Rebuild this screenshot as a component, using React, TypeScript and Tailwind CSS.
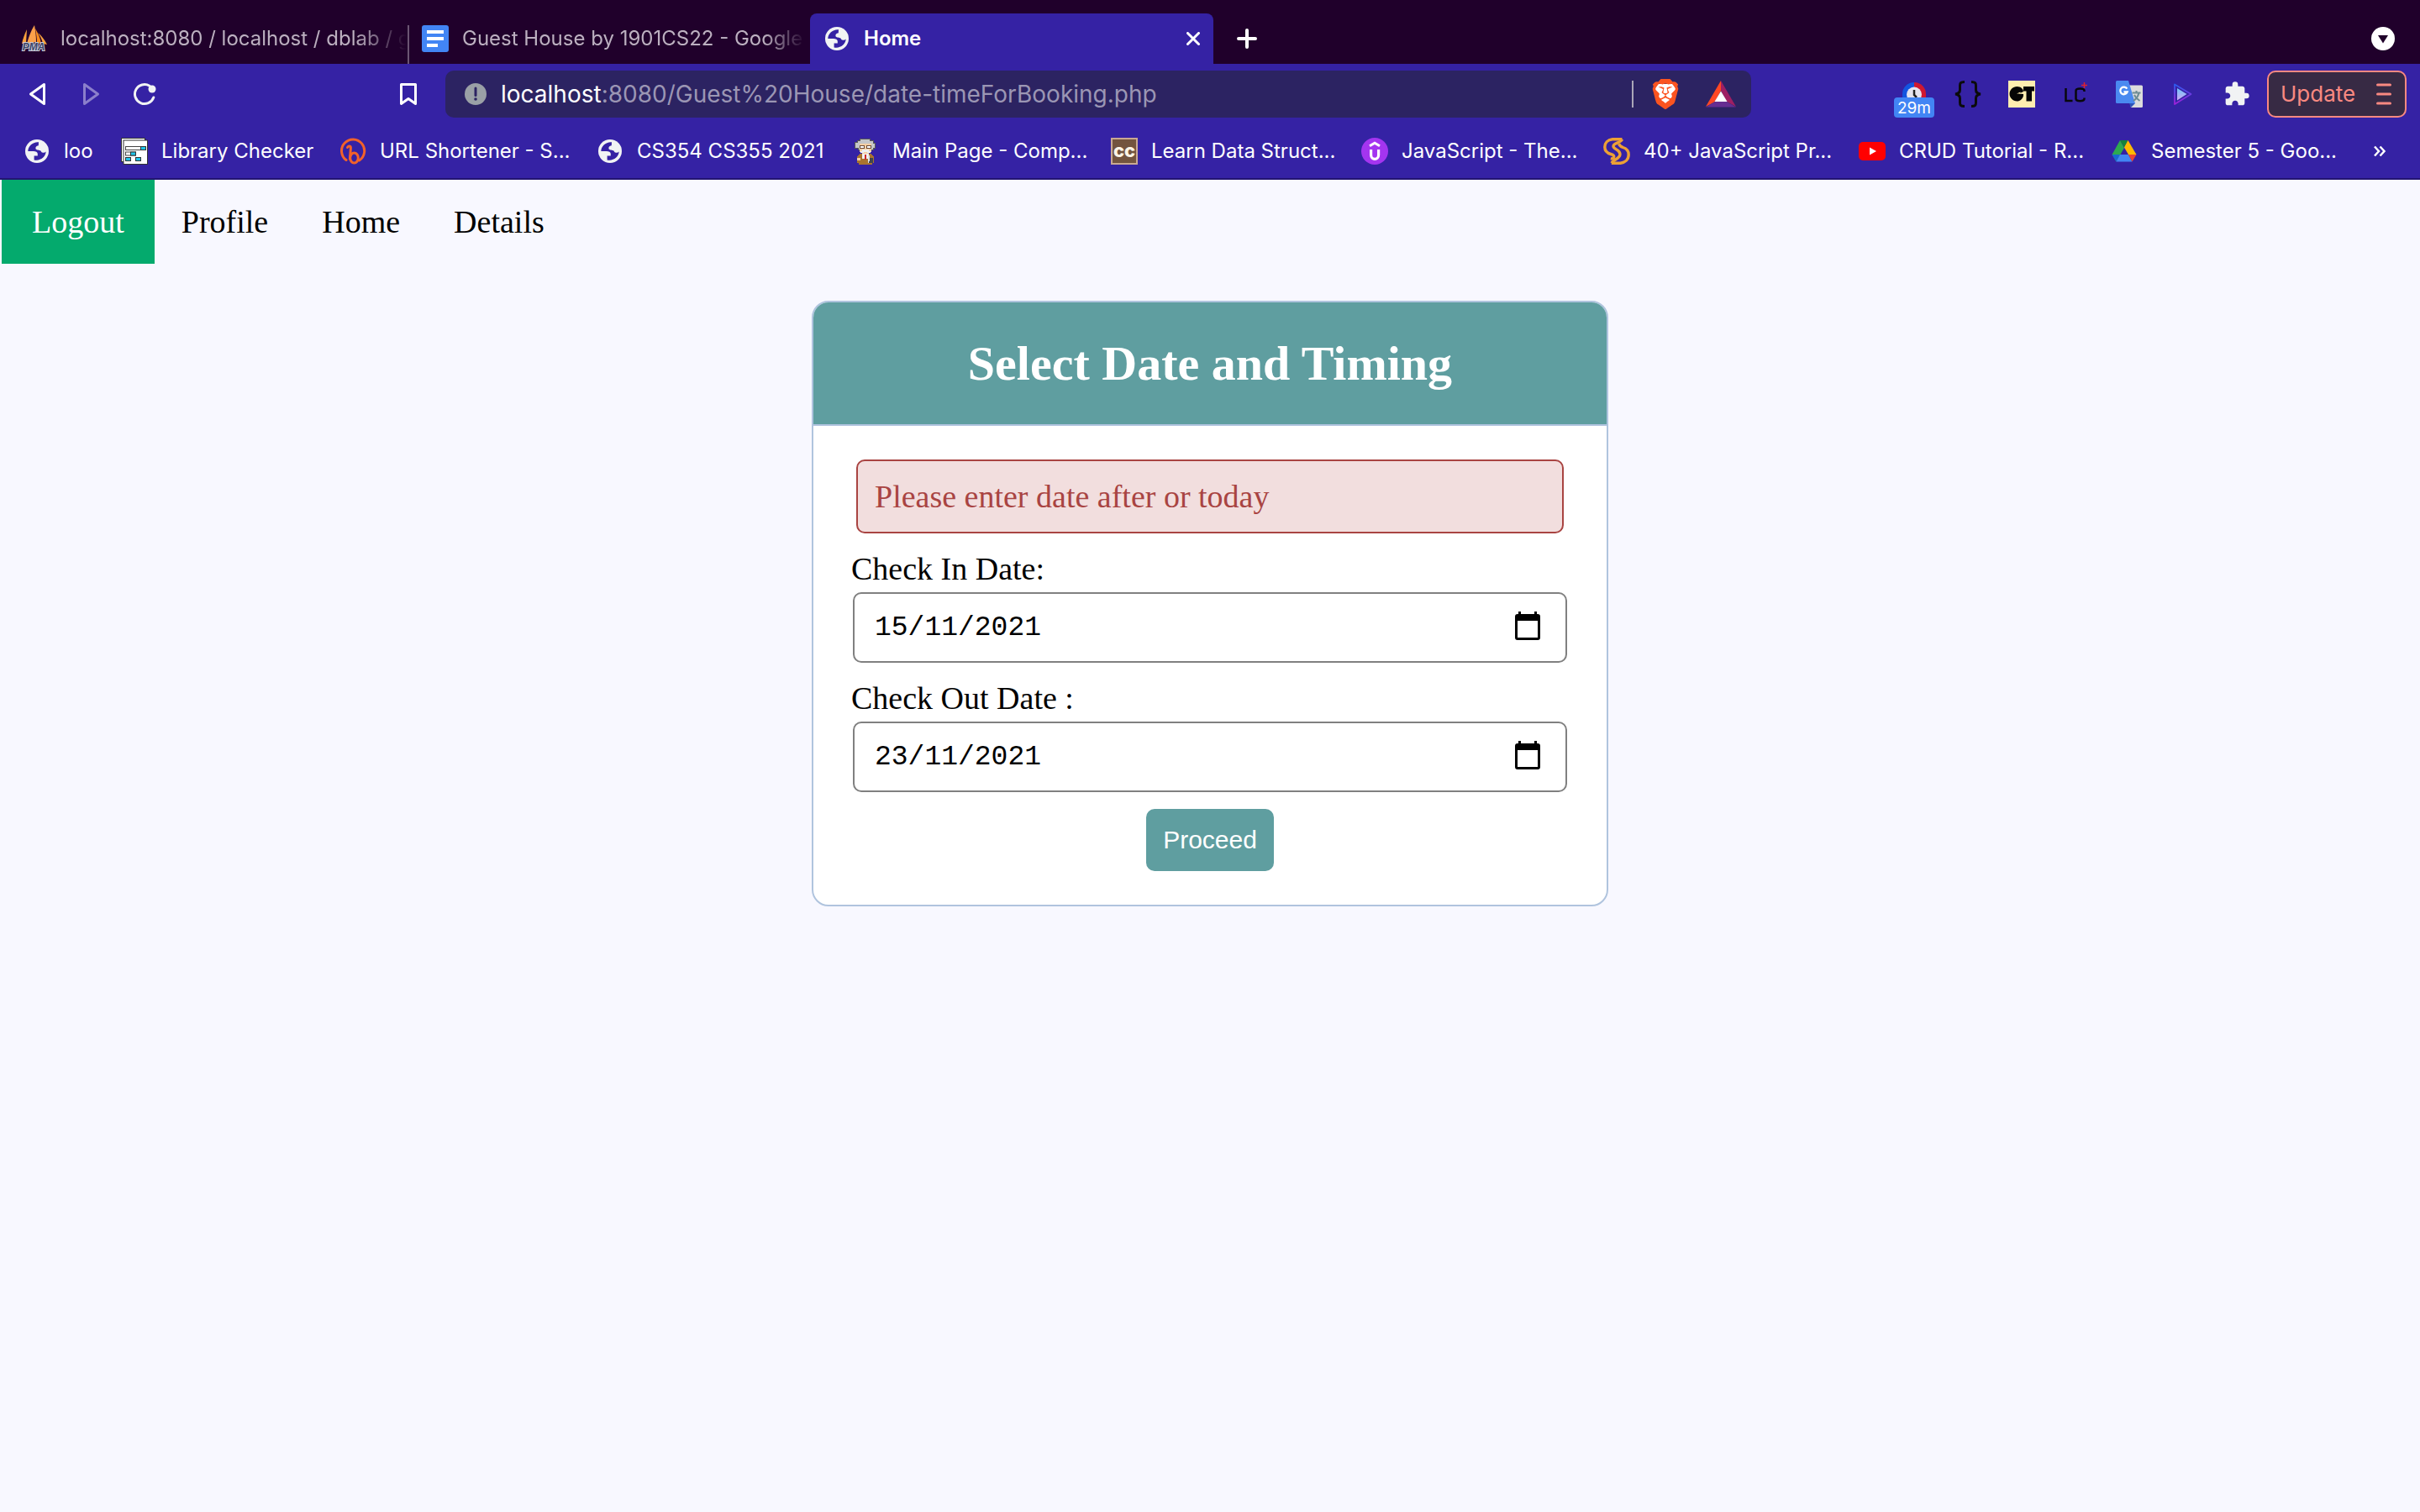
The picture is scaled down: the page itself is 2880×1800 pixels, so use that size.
import type { ReactNode } from "react";
import { SiBrave } from "react-icons/si";
import { MdExtension } from "react-icons/md";

function GlobeIcon() {
  return (
    <svg viewBox="0 0 28 28" className="size-7 shrink-0" aria-hidden="true">
      <circle cx="14" cy="14" r="14" fill="#f1f3f4" />
      <path
        d="M16 3.2C9 2.6 3.3 8 3.3 14H9.8C12.5 14 14.8 15 14.8 17V19.5H10.6V24.4C17.5 26 24.3 21.3 24.7 14.6C23 16.4 20.2 16.2 19 14.4C17.8 12.2 14.6 13.4 12.6 11.6C11.8 9.2 13 7.6 15.8 7.2Z"
        fill="#3522a4"
      />
    </svg>
  );
}

function PmaIcon() {
  return (
    <svg viewBox="0 0 32 32" className="size-8 shrink-0" aria-hidden="true">
      <path d="M8 5C5 11 3 17 2 22L7 21Z" fill="#f9a13d" />
      <path d="M17 0C12 8 10 15 8 22L19 20C19 12 18 6 17 0Z" fill="#fba04a" />
      <path d="M18 4C19 10 20 15 20 21L25 22C24 15 21 9 18 4Z" fill="#f98b1d" />
      <path d="M21 9C24 13 26 17 27 22L32 23C29 17 25 12 21 9Z" fill="#f9a13d" />
      <text x="16" y="30" textAnchor="middle" fontFamily="Liberation Sans, sans-serif" fontWeight="700" fontStyle="italic" fontSize="12" fill="#3b4468" stroke="#c9cbd8" strokeWidth="2" paintOrder="stroke">
        PMA
      </text>
    </svg>
  );
}

function DocsIcon() {
  return (
    <svg viewBox="0 0 32 32" className="size-8 shrink-0" aria-hidden="true">
      <rect width="32" height="32" rx="3" fill="#4285f4" />
      <path d="M6 6H26V10H6ZM6 14H26V18H6ZM6 22H19V26H6Z" fill="#fff" />
    </svg>
  );
}

function LibraryIcon() {
  return (
    <svg viewBox="0 0 32 32" className="size-8 shrink-0" aria-hidden="true">
      <rect x="0.5" y="0.5" width="28" height="28" fill="#fff" stroke="#333" />
      <rect x="3" y="3" width="28.5" height="28.5" fill="#fff" stroke="#333" />
      <g stroke="#444" fill="#fff">
        <rect x="5.5" y="10.5" width="24" height="4" />
        <rect x="5.5" y="17" width="12" height="4" />
      </g>
      <g stroke="#333" fill="#1fc4e8">
        <rect x="23.5" y="10.5" width="6" height="4" />
        <rect x="11.5" y="17" width="6" height="4" />
        <rect x="5.5" y="23.5" width="6" height="4" />
        <rect x="17.5" y="23.5" width="6" height="4" />
      </g>
    </svg>
  );
}

function BitlyIcon() {
  return (
    <svg viewBox="0 0 32 32" className="size-8 shrink-0" aria-hidden="true" fill="none" stroke="#f2622a" strokeLinecap="round">
      <path d="M8 26.5A13.6 13.6 0 1 1 23.5 27" strokeWidth="3" />
      <path d="M9.5 11.5C11 9.2 13.6 9.6 13.4 12.5L12.4 25" strokeWidth="3" />
      <ellipse cx="17.5" cy="24" rx="4.8" ry="6" strokeWidth="3" />
    </svg>
  );
}

function ProfessorIcon() {
  return (
    <svg viewBox="0 0 32 32" className="size-8 shrink-0" aria-hidden="true" shapeRendering="crispEdges">
      <path d="M9 1H22V3H26V6H28V13H26V15H7V13H3V5H6V3H9Z" fill="#555" />
      <path d="M10 2H21V4H25V7H27V12H25V14H8V12H4V6H7V4H10Z" fill="#c4c6c8" />
      <path d="M9 7H23V17H20V19H12V17H9Z" fill="#f4cfa4" />
      <path d="M9 9H15V13H9ZM17 9H23V13H17Z" fill="#6b4a35" />
      <path d="M10 10H14V12H10ZM18 10H22V12H18Z" fill="#fff" />
      <path d="M12 14H20V16H22V18H18V17H14V18H10V16H12Z" fill="#eceff1" />
      <path d="M9 19H23L26 23V30H24V32H8V30H6V23Z" fill="#a9742f" />
      <path d="M12 19H20V25H12Z" fill="#f2f2f2" />
      <path d="M15 20H17V26H15Z" fill="#cc2a2a" />
      <path d="M19 21H21V30H19Z" fill="#dfe3e6" />
      <path d="M21 24H25V30H20V28H21Z" fill="#3f4650" />
      <path d="M6 24H10V27H6Z" fill="#f4cfa4" />
    </svg>
  );
}

function CodeChefIcon() {
  return (
    <span className="flex size-8 shrink-0 items-center justify-center border-2 border-[#c9a893] bg-[#73543f] pb-0.5 text-[22px] leading-none font-extrabold text-[#fbf3e6]">
      cc
    </span>
  );
}

function UdemyIcon() {
  return (
    <svg viewBox="0 0 32 32" className="size-8 shrink-0" aria-hidden="true" fill="none" stroke="#fff">
      <circle cx="16" cy="16" r="16" fill="#a435f0" stroke="none" />
      <path d="M10 9.8L16 6.2L22 9.8" strokeWidth="3" />
      <path d="M11.6 14V20.5C11.6 27 20.6 27 20.6 20.5V14" strokeWidth="3.2" />
    </svg>
  );
}

function ScalerIcon() {
  return (
    <svg viewBox="0 0 32 32" className="size-8 shrink-0" aria-hidden="true" fill="none" stroke="#eda035" strokeWidth="3.4">
      <path d="M22.500 1.800H11C5 2.500 1.800 6.500 1.800 11C1.800 16 5.500 18.500 9 19.500C12.500 20.500 13.500 22 12.500 23.800C11.500 25.300 10 25 8.800 24.800" />
      <path d="M22.500 1.800C20.500 6.500 12 6 12 10C12 14 20 14 20 19.500C20 25 12.500 25.500 9.800 30.200" />
      <path d="M18.500 7.200C19.500 9.500 21 10.500 23.500 11.500C28 13 30.200 16 30.200 20C30.200 26 26 29.500 20.500 30.200H9.800" />
    </svg>
  );
}

function YoutubeIcon() {
  return (
    <svg viewBox="0 0 32 32" className="size-8 shrink-0" aria-hidden="true">
      <rect x="0" y="5" width="32" height="22" rx="5" fill="#f00" />
      <path d="M13 11.4L21 16L13 20.6Z" fill="#fff" />
    </svg>
  );
}

function DriveIcon() {
  return (
    <svg viewBox="0 0 32 32" className="size-8 shrink-0" aria-hidden="true">
      <path d="M11 3L16 12L6.500 28.500L1.500 20Z" fill="#2da94f" />
      <path d="M11 3H20.500L16 11.500Z" fill="#12833b" />
      <path d="M20.500 3L30.500 20H21L16 11.500Z" fill="#ffba00" />
      <path d="M1.500 20H11L6.500 28.500Z" fill="#1967d2" />
      <path d="M11 20H21L25.500 28.500H6.500Z" fill="#4285f4" />
      <path d="M21 20H30.500L25.500 28.500Z" fill="#ea4335" />
    </svg>
  );
}

function TimerIcon() {
  return (
    <span className="relative flex size-8 justify-center">
      <svg viewBox="0 0 32 32" className="size-8" aria-hidden="true">
        <path d="M16 2A14 14 0 0 0 2 16V20H16Z" fill="#1355e0" />
        <path d="M16 2A14 14 0 0 1 30 16V20H16Z" fill="#cf1830" />
        <circle cx="16" cy="16.500" r="9" fill="#e6e4ef" />
        <path d="M16 11V17L19 20" stroke="#222" strokeWidth="2.500" fill="none" />
      </svg>
      <span className="absolute top-5 flex h-6 w-12 items-center justify-center rounded bg-[#4285f4] text-[19px] leading-none text-white">
        29m
      </span>
    </span>
  );
}

function BracesIcon() {
  return (
    <svg viewBox="0 0 32 32" className="size-8" aria-hidden="true" fill="none" stroke="#0b0b0b" strokeWidth="3">
      <path d="M12 1.500C7 1.500 6.500 3 6.500 6V11C6.500 14 5 15.500 1 16C5 16.500 6.500 18 6.500 21V26C6.500 29 7 30.500 12 30.500" />
      <path d="M20 1.500C25 1.500 25.500 3 25.500 6V11C25.500 14 27 15.500 31 16C27 16.500 25.500 18 25.500 21V26C25.500 29 25 30.500 20 30.500" />
    </svg>
  );
}

function CtIcon() {
  return (
    <svg viewBox="0 0 32 32" className="size-8" aria-hidden="true">
      <rect width="32" height="32" fill="#ffeeb0" />
      <path d="M10.500 7C15 7 18 10 18 13L13 15.500L18 16V18C17 22 14 24.500 10.500 24.500C5.500 24.500 1.500 20.500 1.500 15.800C1.500 11 5.500 7 10.500 7Z" fill="#050505" />
      <path d="M10 15.500L14.500 13.500V15.500Z" fill="#ffeeb0" />
      <path d="M18 7H31V12.500H28V24.500H21.500V12.500H18Z" fill="#050505" />
    </svg>
  );
}

function LcIcon() {
  return (
    <svg viewBox="0 0 32 32" className="size-8" aria-hidden="true" fill="none">
      <path d="M4.500 9V24H12.500" stroke="#08080c" strokeWidth="2.500" />
      <path d="M26.500 13V12C26.500 8.800 16.500 8.800 16.500 12V21.500C16.500 25 26.500 25 26.500 21.500V20.500" stroke="#08080c" strokeWidth="2.500" />
      <path d="M26.500 2V9M23 5.500H30" stroke="#e0202f" strokeWidth="1.500" />
    </svg>
  );
}

function TranslateIcon() {
  return (
    <svg viewBox="0 0 32 32" className="size-8" aria-hidden="true">
      <path d="M13 5.500H30.500Q32 5.500 32 7V30.500Q32 32 30.500 32H18Z" fill="#dcdcdc" />
      <path d="M16 27H23L18 32Z" fill="#2f55b8" />
      <path d="M1.500 0H15L23 27H1.500Q0 27 0 25.500V1.500Q0 0 1.500 0Z" fill="#4a8af0" />
      <path d="M13.300 9.700A4.300 4.300 0 1 0 13.600 13.500H9.500" fill="none" stroke="#fff" strokeWidth="2.300" />
      <path d="M19.500 14.500H29.500M24.500 12V14.500M27.500 14.500C26.500 19 24 22 21 24M22 17C23.500 20 26 22.500 28.500 24" fill="none" stroke="#6d8c94" strokeWidth="2" />
    </svg>
  );
}

function PlayIcon() {
  return (
    <svg viewBox="0 0 32 32" className="size-8" aria-hidden="true">
      <defs>
        <linearGradient id="playEdge" x1="0" y1="0" x2="0" y2="1">
          <stop offset="0" stopColor="#2b5cf0" />
          <stop offset="0.500" stopColor="#6a3be0" />
          <stop offset="1" stopColor="#a020d8" />
        </linearGradient>
        <linearGradient id="playFill" x1="0" y1="0" x2="0" y2="1">
          <stop offset="0" stopColor="#6fc4fa" />
          <stop offset="1" stopColor="#cfa8f4" />
        </linearGradient>
      </defs>
      <path d="M6 4.500L25.500 16L6 28Z" fill="none" stroke="url(#playEdge)" strokeWidth="1.800" strokeLinejoin="round" />
      <path d="M9 9L20.500 16L9 23.500Z" fill="url(#playFill)" />
    </svg>
  );
}

const bookmarks: { label: string; icon: ReactNode; width: string }[] = [
  { label: "loo", icon: <GlobeIcon />, width: "w-[116px]" },
  { label: "Library Checker", icon: <LibraryIcon />, width: "w-[260px]" },
  { label: "URL Shortener - S...", icon: <BitlyIcon />, width: "w-[306px]" },
  { label: "CS354 CS355 2021", icon: <GlobeIcon />, width: "w-[304px]" },
  { label: "Main Page - Comp...", icon: <ProfessorIcon />, width: "w-[308px]" },
  { label: "Learn Data Struct...", icon: <CodeChefIcon />, width: "w-[298px]" },
  { label: "JavaScript - The...", icon: <UdemyIcon />, width: "w-[288px]" },
  { label: "40+ JavaScript Pr...", icon: <ScalerIcon />, width: "w-[304px]" },
  { label: "CRUD Tutorial - R...", icon: <YoutubeIcon />, width: "w-[300px]" },
  { label: "Semester 5 - Goo...", icon: <DriveIcon />, width: "w-[300px]" },
];

const extensions: { name: string; icon: ReactNode }[] = [
  { name: "Timer", icon: <TimerIcon /> },
  { name: "JSON viewer", icon: <BracesIcon /> },
  { name: "CT", icon: <CtIcon /> },
  { name: "LC", icon: <LcIcon /> },
  { name: "Translate", icon: <TranslateIcon /> },
  { name: "Player", icon: <PlayIcon /> },
  { name: "Extensions", icon: <MdExtension className="size-8 text-[#f1f3f4]" /> },
];

function TabStrip() {
  return (
    <div className="flex h-[76px] items-end bg-[#20002b] text-[24px] leading-8 text-[#bcb0c0]">
      <button type="button" className="flex h-[60px] w-[484px] items-center gap-4 pl-6 text-left">
        <PmaIcon />
        <span className="min-w-0 flex-1 overflow-hidden whitespace-nowrap [mask-image:linear-gradient(to_right,black_85%,transparent)]">
          localhost:8080 / localhost / dblab / guest
        </span>
      </button>
      <span className="mx-px h-[46px] w-0.5 bg-[#6b5573]" />
      <button type="button" className="flex h-[60px] w-[476px] items-center gap-4 px-[14px] text-left">
        <DocsIcon />
        <span className="-mr-2 min-w-0 flex-1 overflow-hidden whitespace-nowrap [mask-image:linear-gradient(to_right,black_88%,transparent)]">
          Guest House by 1901CS22 - Google Docs
        </span>
      </button>
      <div className="flex h-[60px] w-[480px] items-center gap-[18px] rounded-t-lg bg-[#3522a4] pr-4 pl-[18px] font-semibold text-white">
        <GlobeIcon />
        <span className="flex-1">Home</span>
        <button type="button" aria-label="Close tab">
          <svg viewBox="0 0 16 16" className="size-4" fill="none" stroke="#fff" strokeWidth="3" strokeLinecap="round">
            <path d="M1.500 1.500L14.500 14.500M14.500 1.500L1.500 14.500" />
          </svg>
        </button>
      </div>
      <button type="button" aria-label="New tab" className="flex h-[60px] items-center pl-7">
        <svg viewBox="0 0 24 24" className="size-6" fill="none" stroke="#fff" strokeWidth="4" strokeLinecap="round">
          <path d="M12 2V22M2 12H22" />
        </svg>
      </button>
      <button type="button" aria-label="Search tabs" className="mr-[30px] ml-auto flex h-[60px] items-center">
        <svg viewBox="0 0 28 28" className="size-7">
          <circle cx="14" cy="14" r="14" fill="#fff" />
          <path d="M8 10H20L14 19.500Z" fill="#20002b" />
        </svg>
      </button>
    </div>
  );
}

function Toolbar() {
  return (
    <div className="flex h-[72px] items-center bg-[#3522a4]">
      <button type="button" aria-label="Back" className="ml-8">
        <svg viewBox="0 0 24 28" className="h-7 w-6" fill="none" stroke="#fff" strokeWidth="3" strokeLinejoin="round">
          <path d="M20.500 2.500V25.500L4.500 14Z" />
        </svg>
      </button>
      <button type="button" aria-label="Forward" className="ml-10" disabled>
        <svg viewBox="0 0 24 28" className="h-7 w-6" fill="none" stroke="#8b7fcb" strokeWidth="3" strokeLinejoin="round">
          <path d="M4.500 2.500V25.500L20.500 14Z" />
        </svg>
      </button>
      <button type="button" aria-label="Reload" className="ml-[38px]">
        <svg viewBox="0 0 28 28" className="size-7" fill="none" stroke="#f1f3f4" strokeWidth="3" strokeLinecap="round">
          <path d="M20 4.200A11.500 11.500 0 1 0 24.800 18" />
          <circle cx="23" cy="8" r="4.500" fill="#f1f3f4" stroke="none" />
        </svg>
      </button>
      <button type="button" aria-label="Bookmark this page" className="ml-72">
        <svg viewBox="0 0 24 28" className="h-7 w-6" fill="none" stroke="#fff" strokeWidth="3" strokeLinejoin="round">
          <path d="M3.500 2.500H20.500V25.500L12 19.500L3.500 25.500Z" />
        </svg>
      </button>
      <div className="ml-8 flex h-14 w-[1554px] items-center rounded-[10px] bg-[#2c2362] pr-[18px] pl-[22px]">
        <svg viewBox="0 0 28 28" className="size-7" aria-hidden="true">
          <circle cx="14" cy="14" r="13" fill="#9aa0a6" />
          <path d="M14 7V15.500" stroke="#2c2362" strokeWidth="3" strokeLinecap="round" />
          <circle cx="14" cy="20" r="1.800" fill="#2c2362" />
        </svg>
        <div className="ml-4 flex-1 text-[28px] leading-8 whitespace-nowrap text-[#9b96b4]">
          <span className="text-white">localhost</span>:8080/Guest%20House/date-timeForBooking.php
        </div>
        <span className="h-8 w-0.5 bg-[#aaa6b8]" />
        <button type="button" aria-label="Shields" className="relative ml-5">
          <svg viewBox="0 0 36 36" className="size-9">
            <path d="M9 6H27L31 12L27 27L18 34L9 27L5 12Z" fill="#fff" />
          </svg>
          <SiBrave className="absolute inset-0 size-9 text-[#fb5420]" />
        </button>
        <button type="button" aria-label="Rewards" className="ml-[30px]">
          <svg viewBox="0 0 36 32" className="h-8 w-9">
            <path d="M18 0V12L11 25L0 31Z" fill="#ff4724" />
            <path d="M18 0V12L25 25L36 31Z" fill="#9e1f63" />
            <path d="M11 25H25L36 31.500H0Z" fill="#662d91" />
            <path d="M18 12.500L25.500 25H10.500Z" fill="#fff" />
          </svg>
        </button>
      </div>
      <div className="ml-auto flex gap-8">
        {extensions.map((item) => (
          <button key={item.name} type="button" aria-label={item.name}>
            {item.icon}
          </button>
        ))}
      </div>
      <button
        type="button"
        className="mr-4 ml-5 flex h-14 w-[166px] items-center justify-between rounded-[10px] border-2 border-[#f98981] bg-[#372a44] pr-4 pl-[14px] text-[26px] leading-8 text-[#f98981]"
      >
        Update
        <svg viewBox="0 0 18 26" className="h-[26px] w-[18px]" stroke="#f98981" strokeWidth="3" strokeLinecap="round" aria-hidden="true">
          <path d="M1.500 2H16.500M1.500 13H16.500M1.500 24H16.500" />
        </svg>
      </button>
    </div>
  );
}

function BookmarksBar() {
  return (
    <div className="flex h-[66px] items-center border-b-2 border-[#231571] bg-[#3522a4] pl-7 text-[24px] leading-8 text-white">
      {bookmarks.map((item) => (
        <a key={item.label} href="#" className={`flex shrink-0 items-center gap-4 whitespace-nowrap ${item.width}`}>
          <span className="flex w-8 shrink-0 justify-center">{item.icon}</span>
          {item.label}
        </a>
      ))}
      <button type="button" aria-label="More bookmarks" className="mr-10 ml-auto">
        <svg viewBox="0 0 16 14" className="h-[14px] w-4" fill="none" stroke="#fff" strokeWidth="2.500">
          <path d="M2 1.500L7 7L2 12.500M8.500 1.500L13.500 7L8.500 12.500" />
        </svg>
      </button>
    </div>
  );
}

function DateField({ id, label, value }: { id: string; label: string; value: string }) {
  return (
    <div className="mb-5">
      <label htmlFor={id} className="mb-1.5 block leading-11">
        {label}
      </label>
      <div className="mx-0.5 flex h-[84px] items-center rounded-[10px] border-2 border-[#808080] bg-white pr-[30px] pl-6">
        <input
          id={id}
          type="text"
          defaultValue={value}
          className="min-w-0 flex-1 bg-transparent pt-0.5 font-['Liberation_Mono',monospace] text-[33px] leading-10 outline-none"
        />
        <button type="button" aria-label={`Open calendar for ${label}`} className="pb-1">
          <svg viewBox="0 0 30 34" className="h-[34px] w-[30px]">
            <path d="M4 0H7V3H23V0H26V3H27Q30 3 30 6V31Q30 34 27 34H3Q0 34 0 31V6Q0 3 3 3H4ZM3 11V31H27V11Z" fill="#000" fillRule="evenodd" />
          </svg>
        </button>
      </div>
    </div>
  );
}

const navLinks = ["Profile", "Home", "Details"];

export default function App() {
  return (
    <div className="min-h-screen overflow-x-hidden bg-[#f8f8ff] font-[Inter,sans-serif]">
      <header>
        <TabStrip />
        <Toolbar />
        <BookmarksBar />
      </header>
      <div className="font-['Liberation_Serif',serif] text-[38px] leading-11 text-black">
        <nav className="flex pl-0.5">
          <a href="#" className="bg-[#04aa6d] px-9 py-7 text-white">
            Logout
          </a>
          {navLinks.map((link) => (
            <a key={link} href="#" className="px-8 py-7">
              {link}
            </a>
          ))}
        </nav>
        <main className="mx-auto mt-11 w-full max-w-[948px] overflow-hidden rounded-[20px] border-2 border-[#b0c4de] bg-white">
          <h1 className="border-b-2 border-[#b0c4de] bg-[#5f9ea0] py-10 text-center text-[58px] leading-[65px] font-bold text-white">
            Select Date and Timing
          </h1>
          <form className="px-[45px] py-10" onSubmit={(event) => event.preventDefault()}>
            <div role="alert" className="mx-1.5 mb-5 rounded-[10px] border-2 border-[#a94442] bg-[#f2dede] px-5 py-5 text-[#a94442]">
              Please enter date after or today
            </div>
            <DateField id="check-in" label="Check In Date:" value="15/11/2021" />
            <DateField id="check-out" label="Check Out Date :" value="23/11/2021" />
            <button
              type="submit"
              className="mx-auto block h-[74px] rounded-[10px] bg-[#5f9ea0] px-5 font-['Liberation_Sans',sans-serif] text-[30px] leading-9 text-white"
            >
              Proceed
            </button>
          </form>
        </main>
      </div>
    </div>
  );
}
